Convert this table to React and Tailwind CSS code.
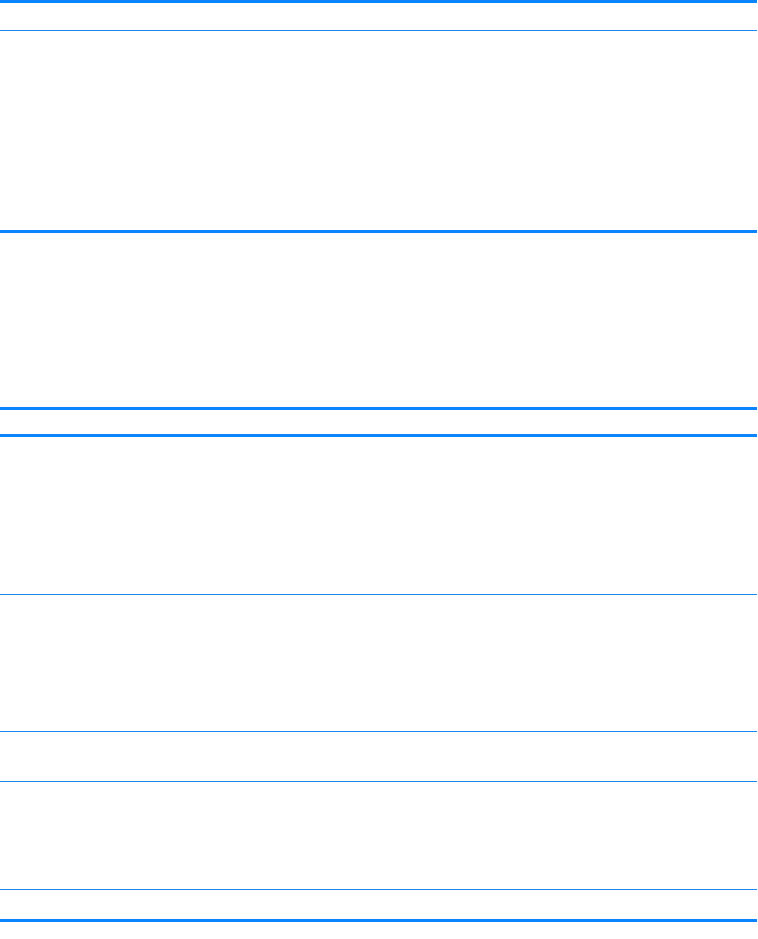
const rows = [
  { h: 'h-[28px]', border: 'border-b border-[#1a86f0]' },
  { h: 'h-[202px]', border: 'border-b-[3px] border-[#0a84ff]' },
  { h: 'h-[177px]', border: 'border-b-[3px] border-[#0a84ff]' },
  { h: 'h-[27px]', border: 'border-b-[3px] border-[#0a84ff]' },
  { h: 'h-[158px]', border: 'border-b border-[#1a86f0]' },
  { h: 'h-[137px]', border: 'border-b border-[#1a86f0]' },
  { h: 'h-[50px]', border: 'border-b border-[#1a86f0]' },
  { h: 'h-[108px]', border: 'border-b border-[#1a86f0]' },
  { h: 'h-[32px]', border: 'border-b-[3px] border-[#0a84ff]' },
];

export default function App() {
  return (
    <div className="w-[758px] h-[939px] bg-white">
      <div className="w-[757px] border-t-[3px] border-[#0a84ff]">
        {rows.map((r, i) => (
          <div key={i} className={`${r.h} ${r.border}`} />
        ))}
      </div>
    </div>
  );
}
